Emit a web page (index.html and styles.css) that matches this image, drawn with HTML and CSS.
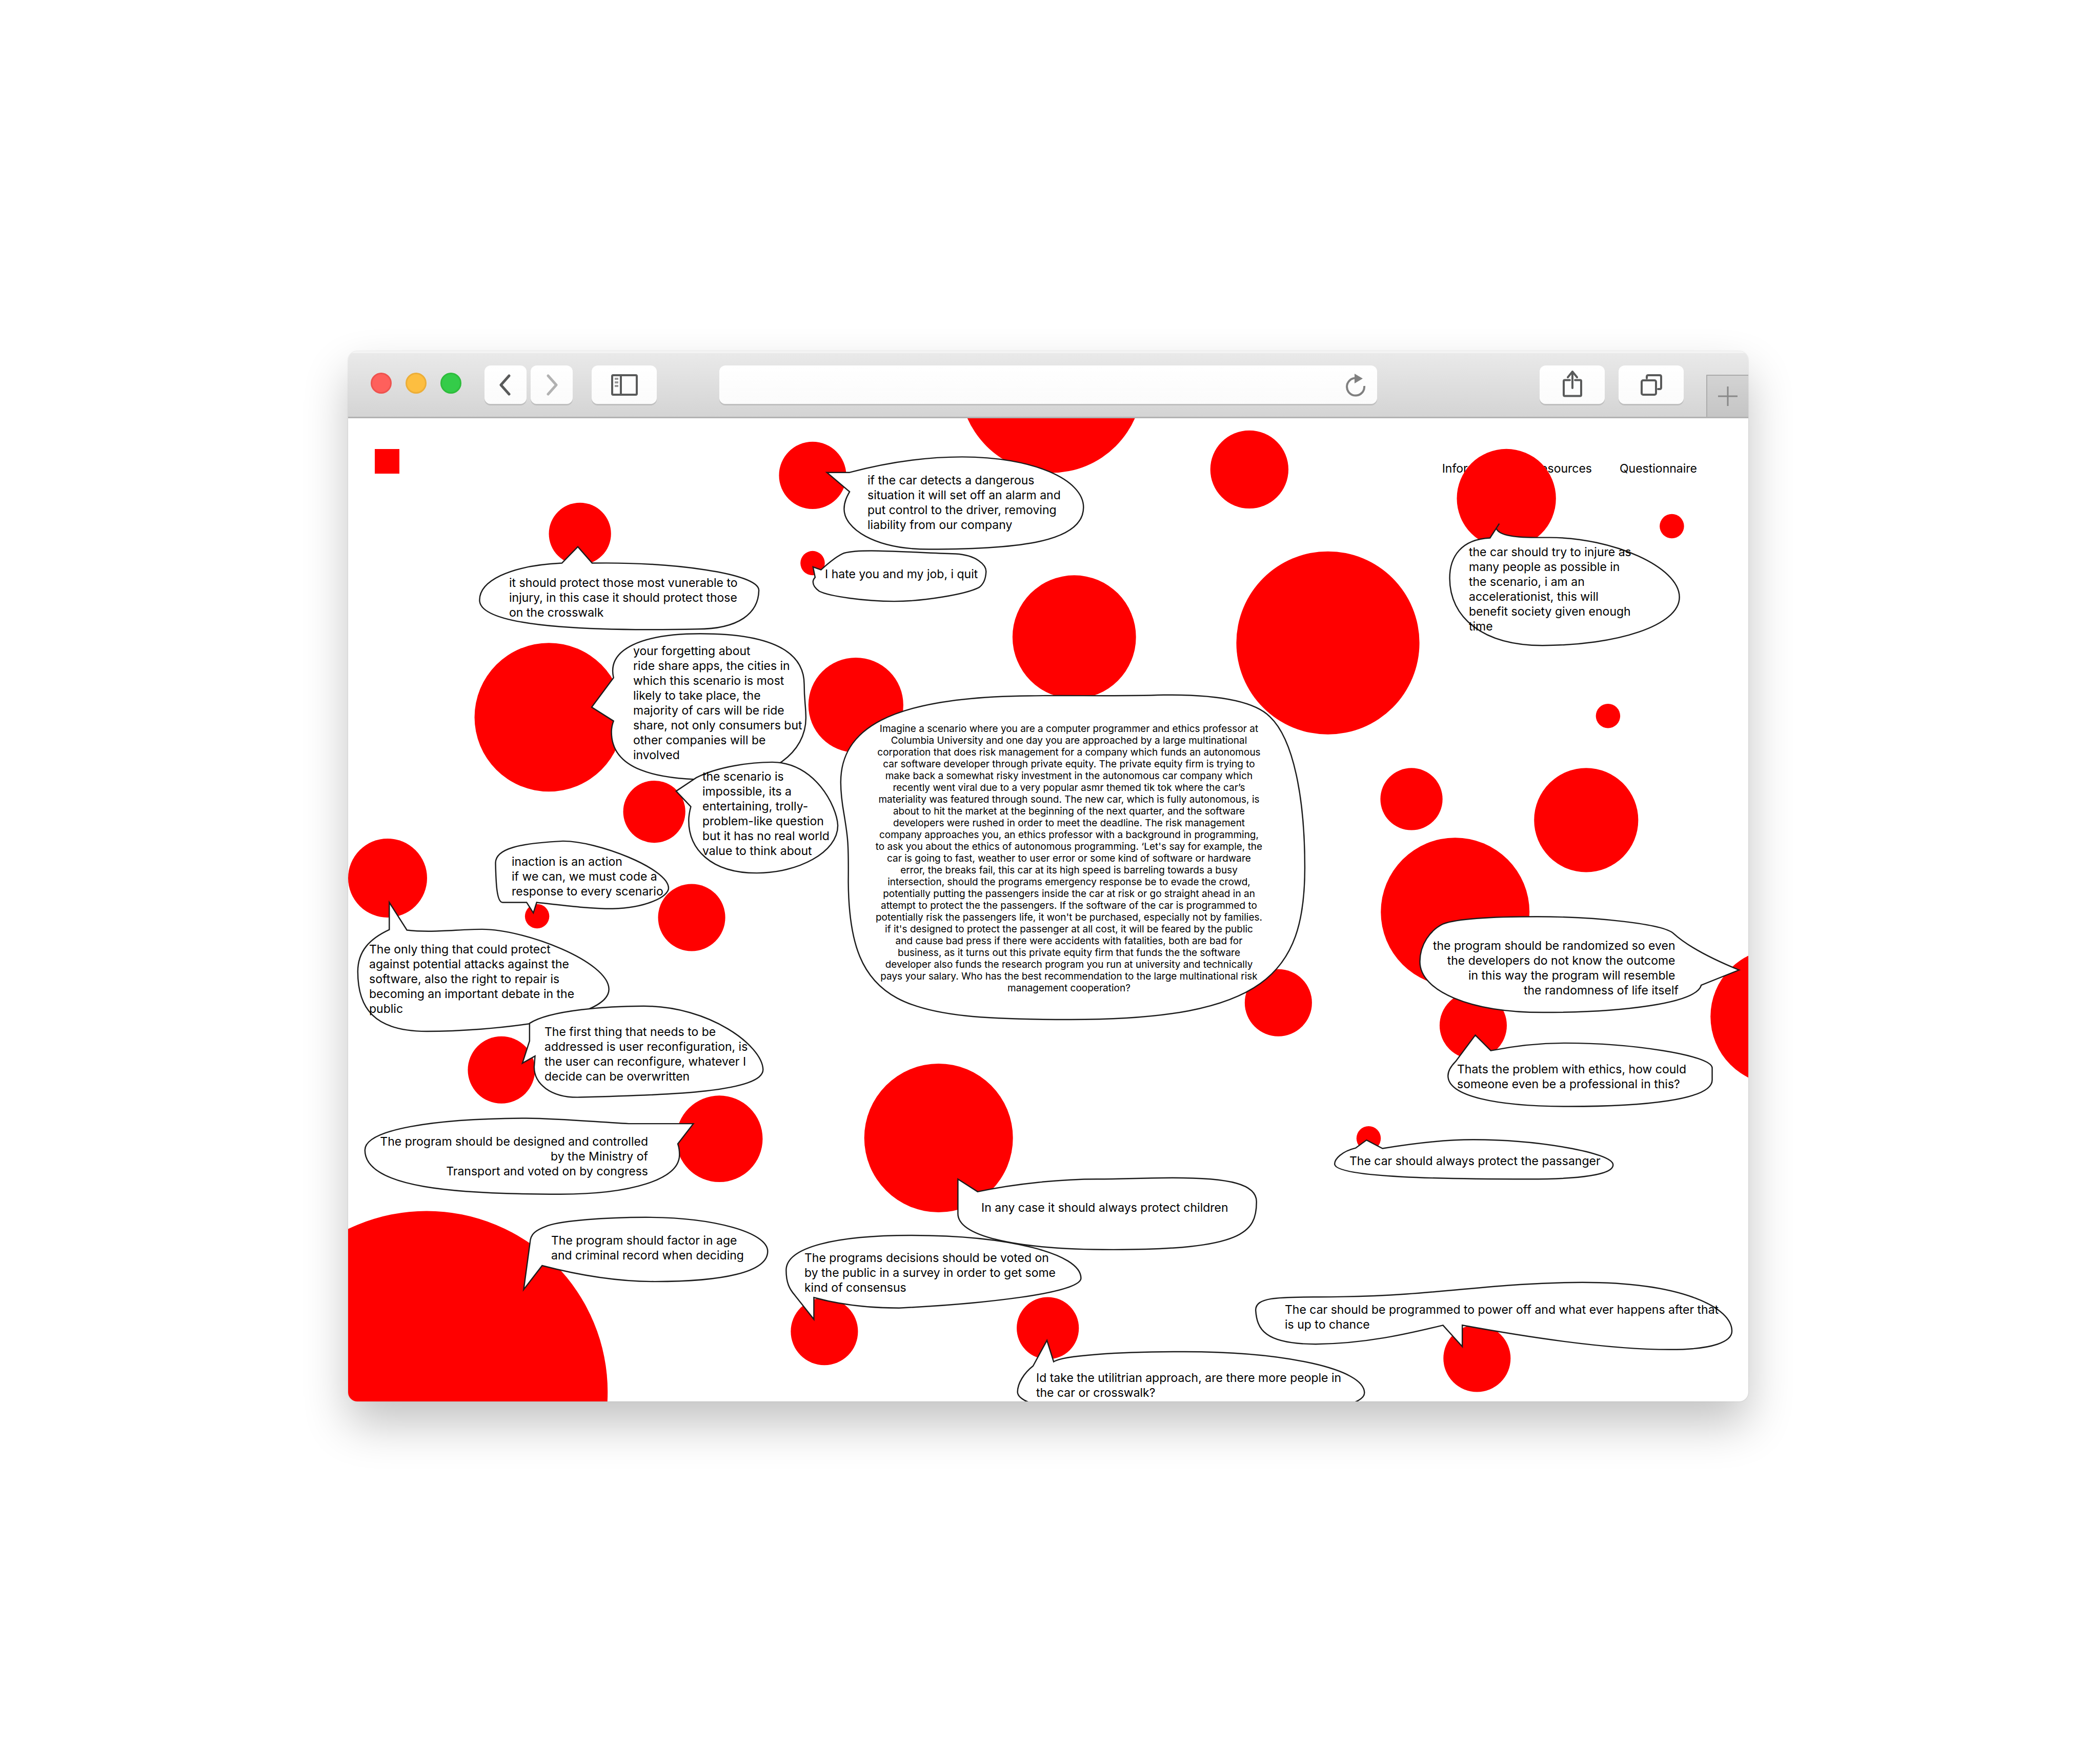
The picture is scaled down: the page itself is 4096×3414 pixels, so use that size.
FILE: index.html
```html
<!DOCTYPE html>
<html lang="en">
<head>
<meta charset="utf-8">
<title>Autonomous ethics</title>
<link rel="stylesheet" href="styles.css">
</head>
<body>
<div class="browser">
  <div class="toolbar">
    <div class="lights">
      <span class="light light-close"></span>
      <span class="light light-minimize"></span>
      <span class="light light-zoom"></span>
    </div>
    <div class="history">
      <button class="tool tool-narrow" type="button" aria-label="Back">
        <svg width="24" height="44" viewBox="0 0 24 44"><path d="M19 4 3 22 19 40" class="chevron"/></svg>
      </button>
      <button class="tool tool-narrow" type="button" aria-label="Forward">
        <svg width="24" height="44" viewBox="0 0 24 44"><path d="M5 4 21 22 5 40" class="chevron chevron-off"/></svg>
      </button>
    </div>
    <button class="tool" type="button" aria-label="Sidebar">
      <svg width="52" height="42" viewBox="0 0 52 42">
        <rect x="2" y="2" width="48" height="38" rx="2" class="line"/>
        <path d="M19 2V40" class="line"/>
        <path d="M7 9h7M7 16h7M7 23h7" class="line line-soft"/>
      </svg>
    </button>
    <div class="address">
      <input class="address-input" type="text" aria-label="Address">
      <button class="reload" type="button" aria-label="Reload">
        <svg width="40" height="46" viewBox="0 0 40 46">
          <path d="M37 25A17 17 0 1 1 20 9.600" class="reload-ring"/>
          <path d="M18 1 34 10.500 18 20Z" class="reload-head"/>
        </svg>
      </button>
    </div>
    <div class="actions">
      <button class="tool" type="button" aria-label="Share">
        <svg width="38" height="55" viewBox="0 0 38 55">
          <path d="M14 18.500H4Q2 18.500 2 20.500V47.500Q2 49.500 4 49.500H34Q36 49.500 36 47.500V20.500Q36 18.500 34 18.500H24" class="line"/>
          <path d="M19 34V2M10 13 19 2 28 13" class="line"/>
        </svg>
      </button>
      <button class="tool" type="button" aria-label="Tabs">
        <svg width="42" height="42" viewBox="0 0 42 42">
          <rect x="2" y="12" width="28" height="28" rx="3" class="line"/>
          <path d="M12 8V5Q12 2 15 2H37Q40 2 40 5V26Q40 29 37 29H34" class="line"/>
        </svg>
      </button>
    </div>
    <button class="new-tab" type="button" aria-label="New tab">
      <svg width="38" height="38" viewBox="0 0 38 38"><path d="M19 0V38M0 19H38" class="plus"/></svg>
    </button>
  </div>

  <main class="canvas">
    <header class="site-header">
      <a class="logo" href="#" aria-label="Home"></a>
      <nav class="site-nav">
        <a href="#">Information</a>
        <a href="#">Resources</a>
        <a href="#">Questionnaire</a>
      </nav>
    </header>

    <svg class="shapes" viewBox="829 996 3334 2342" aria-hidden="true">
      <g class="dots">
        <circle cx="1935" cy="1132" r="80"/>
        <circle cx="2503" cy="908" r="218"/>
        <circle cx="1935" cy="1341" r="29"/>
        <circle cx="2558" cy="1517" r="147"/>
        <circle cx="2975" cy="1118" r="93"/>
        <circle cx="1381" cy="1271" r="74"/>
        <circle cx="1307" cy="1708" r="177"/>
        <circle cx="1558" cy="1933" r="74"/>
        <circle cx="2038" cy="1679" r="113"/>
        <circle cx="3162" cy="1531" r="218"/>
        <circle cx="3587" cy="1187" r="118"/>
        <circle cx="3981" cy="1253" r="29"/>
        <circle cx="3829" cy="1705" r="29"/>
        <circle cx="3361" cy="1903" r="74"/>
        <circle cx="3777" cy="1953" r="124"/>
        <circle cx="3465" cy="2172" r="177"/>
        <circle cx="3508" cy="2442" r="80"/>
        <circle cx="4235" cy="2421" r="162"/>
        <circle cx="3044" cy="2388" r="80"/>
        <circle cx="923" cy="2091" r="94"/>
        <circle cx="1279" cy="2182" r="29"/>
        <circle cx="1647" cy="2185" r="80"/>
        <circle cx="1194" cy="2548" r="80"/>
        <circle cx="1713" cy="2712" r="103"/>
        <circle cx="1016" cy="3315" r="431"/>
        <circle cx="2235" cy="2710" r="177"/>
        <circle cx="1963" cy="3171" r="80"/>
        <circle cx="2495" cy="3163" r="74"/>
        <circle cx="3517" cy="3235" r="80"/>
        <circle cx="3259" cy="2711" r="29"/>
      </g>
      <g class="outlines">
        <path d="M1969 1125L2023 1125C2110 1102 2200 1088 2291 1088C2460 1088 2580 1142 2580 1208C2580 1290 2430 1308 2212 1308C2080 1308 2010 1258 2010 1212C2010 1194 2018 1180 2023 1171Z"/>
        <path d="M1936 1350L1955 1357Q1990 1325 2010 1317C2050 1307 2120 1313 2276 1319C2325 1322 2349 1345 2348 1362C2347 1380 2340 1393 2331 1399C2300 1415 2200 1432 2129 1432C2060 1432 1975 1420 1951 1408C1940 1400 1936 1392 1936 1386Q1936 1380 1941 1375Z"/>
        <path d="M1376 1302L1410 1341C1600 1338 1808 1365 1807 1406C1806 1460 1760 1498 1660 1498C1480 1502 1142 1502 1142 1429C1142 1385 1210 1347 1338 1341Z"/>
        <path d="M1409 1684L1461 1614C1445 1545 1530 1509 1668 1509C1800 1509 1915 1535 1915 1630C1915 1670 1919 1680 1919 1710C1919 1790 1840 1857 1700 1857C1560 1857 1456 1832 1456 1743Q1456 1730 1461 1717Z"/>
        <path d="M1610 1884L1658 1852C1710 1825 1790 1815 1839 1815C1940 1815 1993 1920 1995 1966C1995 2030 1900 2079 1802 2079C1690 2079 1640 2020 1640 1954Q1640 1940 1645 1921Z"/>
        <path d="M1270 2174L1278 2149C1340 2156 1400 2164 1459 2164C1540 2162 1592 2135 1592 2115C1592 2068 1420 2002 1340 2003C1240 2008 1180 2020 1180 2055C1181 2105 1183 2149 1197 2149L1254 2149Z"/>
        <path d="M927 2149L969 2215C1030 2222 1090 2213 1148 2213C1250 2213 1450 2290 1450 2356C1450 2430 1160 2456 1016 2456C890 2456 852 2400 852 2314C852 2265 880 2236 927 2214Z"/>
        <path d="M1261 2437C1310 2405 1450 2396 1533 2396C1690 2396 1815 2490 1817 2547C1817 2600 1600 2608 1381 2613C1310 2615 1272 2580 1272 2541L1274 2515L1244 2532L1261 2479Z"/>
        <path d="M1497 2676L1651 2676L1614 2724Q1618 2735 1618 2750C1618 2810 1500 2844 1334 2844C1090 2844 869 2830 869 2739C869 2690 1030 2664 1253 2663C1340 2664 1420 2672 1497 2676Z"/>
        <path d="M1247 3071L1291 3014C1390 3040 1480 3052 1559 3052C1720 3052 1828 3030 1828 2980C1828 2935 1700 2899 1538 2899C1440 2899 1340 2907 1304 2919C1275 2930 1263 2938 1262 2960Z"/>
        <path d="M1938 3142L1938 3090C2000 3107 2070 3115 2141 3115C2340 3105 2574 3080 2574 3044C2574 2985 2400 2942 2169 2942C1990 2942 1872 2970 1872 3025C1872 3055 1880 3070 1893 3085Z"/>
        <path d="M2281 2808L2328 2838C2420 2818 2530 2808 2613 2808C2670 2808 2735 2805 2792 2805C2930 2805 2992 2820 2992 2862C2992 2935 2960 2976 2651 2976C2400 2976 2281 2940 2281 2890Z"/>
        <path d="M2493 3192L2509 3243C2530 3228 2660 3219 2820 3219C3060 3219 3249 3260 3249 3317C3249 3400 2423 3400 2423 3315C2423 3295 2438 3270 2460 3253Z"/>
        <path d="M3482 3207L3482 3156C3640 3185 3830 3214 3977 3214C4080 3214 4124 3195 4124 3170C4124 3115 4010 3054 3768 3054C3560 3054 3420 3085 3200 3088C3070 3091 2990 3082 2990 3120C2993 3165 3010 3201 3133 3201C3250 3200 3350 3177 3436 3156Z"/>
        <path d="M3254 2715L3292 2735C3370 2722 3440 2714 3508 2714C3660 2714 3841 2745 3841 2774C3841 2798 3760 2808 3640 2808C3450 2808 3178 2805 3178 2772C3178 2760 3195 2742 3228 2734Z"/>
        <path d="M3513 2465L3550 2502C3610 2490 3670 2484 3728 2484C3880 2484 4075 2512 4077 2543L4077 2572C4077 2620 3910 2635 3735 2635C3560 2635 3448 2610 3448 2562C3448 2550 3456 2538 3466 2528Z"/>
        <path d="M4141 2310C4080 2285 4020 2255 3985 2223C3960 2200 3800 2183 3660 2183C3550 2183 3470 2188 3437 2200C3405 2215 3381 2250 3381 2290C3381 2360 3500 2411 3674 2411C3860 2411 4040 2390 4051 2346Z"/>
        <path d="M3570 1247L3563 1258C3568 1275 3610 1280 3656 1280L3690 1280C3840 1280 3999 1350 3999 1422C3999 1490 3850 1537 3673 1537C3530 1537 3452 1470 3452 1377C3452 1325 3480 1284 3548 1281Z"/>
        <path d="M2450 1657C2560 1655 2640 1659 2771 1655C2870 1654 2980 1662 3024 1707C3080 1760 3107 1900 3107 2066C3107 2320 3010 2428 2549 2428C2150 2428 2022 2400 2020 2100C2021 2000 2018 1990 2010 1940Q2002 1895 2002 1863C2002 1740 2110 1660 2450 1657Z"/>
      </g>
    </svg>

    <p class="say say-alarm">if the car detects a dangerous<br>situation it will set off an alarm and<br>put control to the driver, removing<br>liability from our company</p>
    <p class="say say-quit">I hate you and my job, i quit</p>
    <p class="say say-crosswalk">it should protect those most vunerable to<br>injury, in this case it should protect those<br>on the crosswalk</p>
    <p class="say say-rideshare">your forgetting about<br>ride share apps, the cities in<br>which this scenario is most<br>likely to take place, the<br>majority of cars will be ride<br>share, not only consumers but<br>other companies will be<br>involved</p>
    <p class="say say-trolley">the scenario is<br>impossible, its a<br>entertaining, trolly-<br>problem-like question<br>but it has no real world<br>value to think about</p>
    <p class="say say-inaction">inaction is an action<br>if we can, we must code a<br>response to every scenario</p>
    <p class="say say-repair">The only thing that could protect<br>against potential attacks against the<br>software, also the right to repair is<br>becoming an important debate in the<br>public</p>
    <p class="say say-reconfigure">The first thing that needs to be<br>addressed is user reconfiguration, is<br>the user can reconfigure, whatever I<br>decide can be overwritten</p>
    <p class="say say-ministry">The program should be designed and controlled<br>by the Ministry of<br>Transport and voted on by congress</p>
    <p class="say say-age">The program should factor in age<br>and criminal record when deciding</p>
    <p class="say say-children">In any case it should always protect children</p>
    <p class="say say-survey">The programs decisions should be voted on<br>by the public in a survey in order to get some<br>kind of consensus</p>
    <p class="say say-utilitarian">Id take the utilitrian approach, are there more people in<br>the car or crosswalk?</p>
    <p class="say say-chance">The car should be programmed to power off and what ever happens after that<br>is up to chance</p>
    <p class="say say-passenger">The car should always protect the passanger</p>
    <p class="say say-ethics">Thats the problem with ethics, how could<br>someone even be a professional in this?</p>
    <p class="say say-random">the program should be randomized so even&nbsp;<br>the developers do not know the outcome&nbsp;<br>in this way the program will resemble&nbsp;<br>the randomness of life itself</p>
    <p class="say say-injure">the car should try to injure as<br>many people as possible in<br>the scenario, i am an<br>accelerationist, this will<br>benefit society given enough<br>time</p>
    <p class="say scenario">Imagine a scenario where you are a computer programmer and ethics professor at<br>Columbia University and one day you are approached by a large multinational<br>corporation that does risk management for a company which funds an autonomous<br>car software developer through private equity. The private equity firm is trying to<br>make back a somewhat risky investment in the autonomous car company which<br>recently went viral due to a very popular asmr themed tik tok where the car’s<br>materiality was featured through sound. The new car, which is fully autonomous, is<br>about to hit the market at the beginning of the next quarter, and the software<br>developers were rushed in order to meet the deadline. The risk management<br>company approaches you, an ethics professor with a background in programming,<br>to ask you about the ethics of autonomous programming. ‘Let's say for example, the<br>car is going to fast, weather to user error or some kind of software or hardware<br>error, the breaks fail, this car at its high speed is barreling towards a busy<br>intersection, should the programs emergency response be to evade the crowd,<br>potentially putting the passengers inside the car at risk or go straight ahead in an<br>attempt to protect the the passengers. If the software of the car is programmed to<br>potentially risk the passengers life, it won't be purchased, especially not by families.<br>if it's designed to protect the passenger at all cost, it will be feared by the public<br>and cause bad press if there were accidents with fatalities, both are bad for<br>business, as it turns out this private equity firm that funds the the software<br>developer also funds the research program you run at university and technically<br>pays your salary. Who has the best recommendation to the large multinational risk<br>management cooperation?</p>
  </main>
</div>
</body>
</html>
```
FILE: styles.css
```css
* {
  box-sizing: border-box;
}

body {
  min-height: 100vh;
  margin: 0;
  padding: 685px 686px 160px 679px;
  background: #fff;
  color: #000;
  font-family: Inter, "Liberation Sans", sans-serif;
  font-size: 23px;
  line-height: 29px;
}

button {
  margin: 0;
  padding: 0;
  border: 0;
  background: none;
  font: inherit;
}

svg {
  display: block;
  fill: none;
}

.browser {
  overflow: hidden;
  border-radius: 18px;
  background: #fff;
  box-shadow: 0 0 2px rgba(0, 0, 0, 0.2), 0 44px 88px rgba(0, 0, 0, 0.24);
}

/* Toolbar */

.toolbar {
  display: flex;
  align-items: flex-start;
  height: 131px;
  padding: 28px 0 0 44px;
  border-bottom: 3px solid #b2b2b2;
  background: linear-gradient(#eaeaea, #d4d4d4);
  box-shadow: inset 0 4px 0 #f4f4f4;
}

.lights {
  display: flex;
  gap: 27px;
  padding-top: 14px;
  margin-right: 45px;
}

.light {
  width: 41px;
  height: 41px;
  border: 3px solid;
  border-radius: 50%;
}

.light-close {
  border-color: #ee534f;
  background: #fe605c;
}

.light-minimize {
  border-color: #ecae38;
  background: #fdbe40;
}

.light-zoom {
  border-color: #2ebd3c;
  background: #34cc49;
}

.history {
  display: flex;
  gap: 8px;
  margin-right: 37px;
}

.tool,
.address {
  display: flex;
  align-items: center;
  height: 75px;
  border-radius: 12px;
  background: linear-gradient(#fff, #fbfbfb);
  box-shadow: 0 3px 0 #bfbfbf;
}

.tool {
  flex: none;
  justify-content: center;
  width: 127px;
}

.tool-narrow {
  width: 82px;
}

.address {
  flex: 1;
  margin: 0 317px 0 122px;
  padding-right: 22px;
}

.address-input {
  flex: 1;
  min-width: 0;
  height: 75px;
  padding: 0 22px;
  border: 0;
  outline: 0;
  background: none;
  font: inherit;
}

.actions {
  display: flex;
  gap: 27px;
  margin-right: 44px;
}

.new-tab {
  display: flex;
  align-items: center;
  justify-content: center;
  align-self: flex-end;
  width: 82px;
  height: 82px;
  border: solid #ababab;
  border-width: 2px 0 0 2px;
  background: linear-gradient(#d3d3d3, #c5c5c5);
}

.line {
  stroke: #595a5a;
  stroke-width: 4;
  stroke-linecap: round;
  stroke-linejoin: round;
}

.line-soft {
  stroke: #999;
  stroke-linecap: butt;
}

.chevron {
  stroke: #595a5a;
  stroke-width: 5;
  stroke-linecap: round;
  stroke-linejoin: round;
}

.chevron-off {
  stroke: #b2b2b2;
}

.reload-ring {
  stroke: #808080;
  stroke-width: 4;
}

.reload-head {
  fill: #808080;
}

.plus {
  stroke: #888;
  stroke-width: 3;
}

/* Page */

.canvas {
  position: relative;
  overflow: hidden;
  aspect-ratio: 2731 / 1918;
}

.site-header {
  display: flex;
  align-items: flex-start;
  justify-content: space-between;
  padding: 60px 100px 0 52px;
}

.logo {
  width: 48px;
  height: 48px;
  background: #f00;
}

.site-nav {
  display: flex;
  gap: 54px;
  padding-top: 24px;
}

.site-nav a {
  color: inherit;
  text-decoration: none;
}

.shapes {
  position: absolute;
  top: 0;
  left: 0;
  width: 100%;
  pointer-events: none;
}

.dots {
  fill: #f00;
}

.outlines {
  fill: #fff;
  stroke: #1c1c1c;
  stroke-width: 3;
}

.say {
  position: absolute;
  margin: 0;
  white-space: nowrap;
}

.say-alarm { left: 1013px; top: 107px; }
.say-quit { left: 930px; top: 290px; }
.say-crosswalk { left: 314px; top: 307px; }
.say-rideshare { left: 556px; top: 440px; }
.say-trolley { left: 691px; top: 685px; }
.say-inaction { left: 319px; top: 851px; }
.say-repair { left: 41px; top: 1022px; }
.say-reconfigure { left: 383px; top: 1183px; }
.say-ministry { right: 2146px; top: 1397px; text-align: right; }
.say-age { left: 396px; top: 1590px; }
.say-children { left: 1235px; top: 1526px; }
.say-survey { left: 890px; top: 1624px; }
.say-utilitarian { left: 1342px; top: 1858px; }
.say-chance { left: 1827px; top: 1725px; }
.say-passenger { left: 1953px; top: 1435px; }
.say-ethics { left: 2163px; top: 1256px; }
.say-random { right: 136px; top: 1015px; text-align: right; }
.say-injure { left: 2186px; top: 247px; }

.scenario {
  left: 1006px;
  top: 594px;
  width: 800px;
  font-size: 19px;
  line-height: 23px;
  text-align: center;
}
```
